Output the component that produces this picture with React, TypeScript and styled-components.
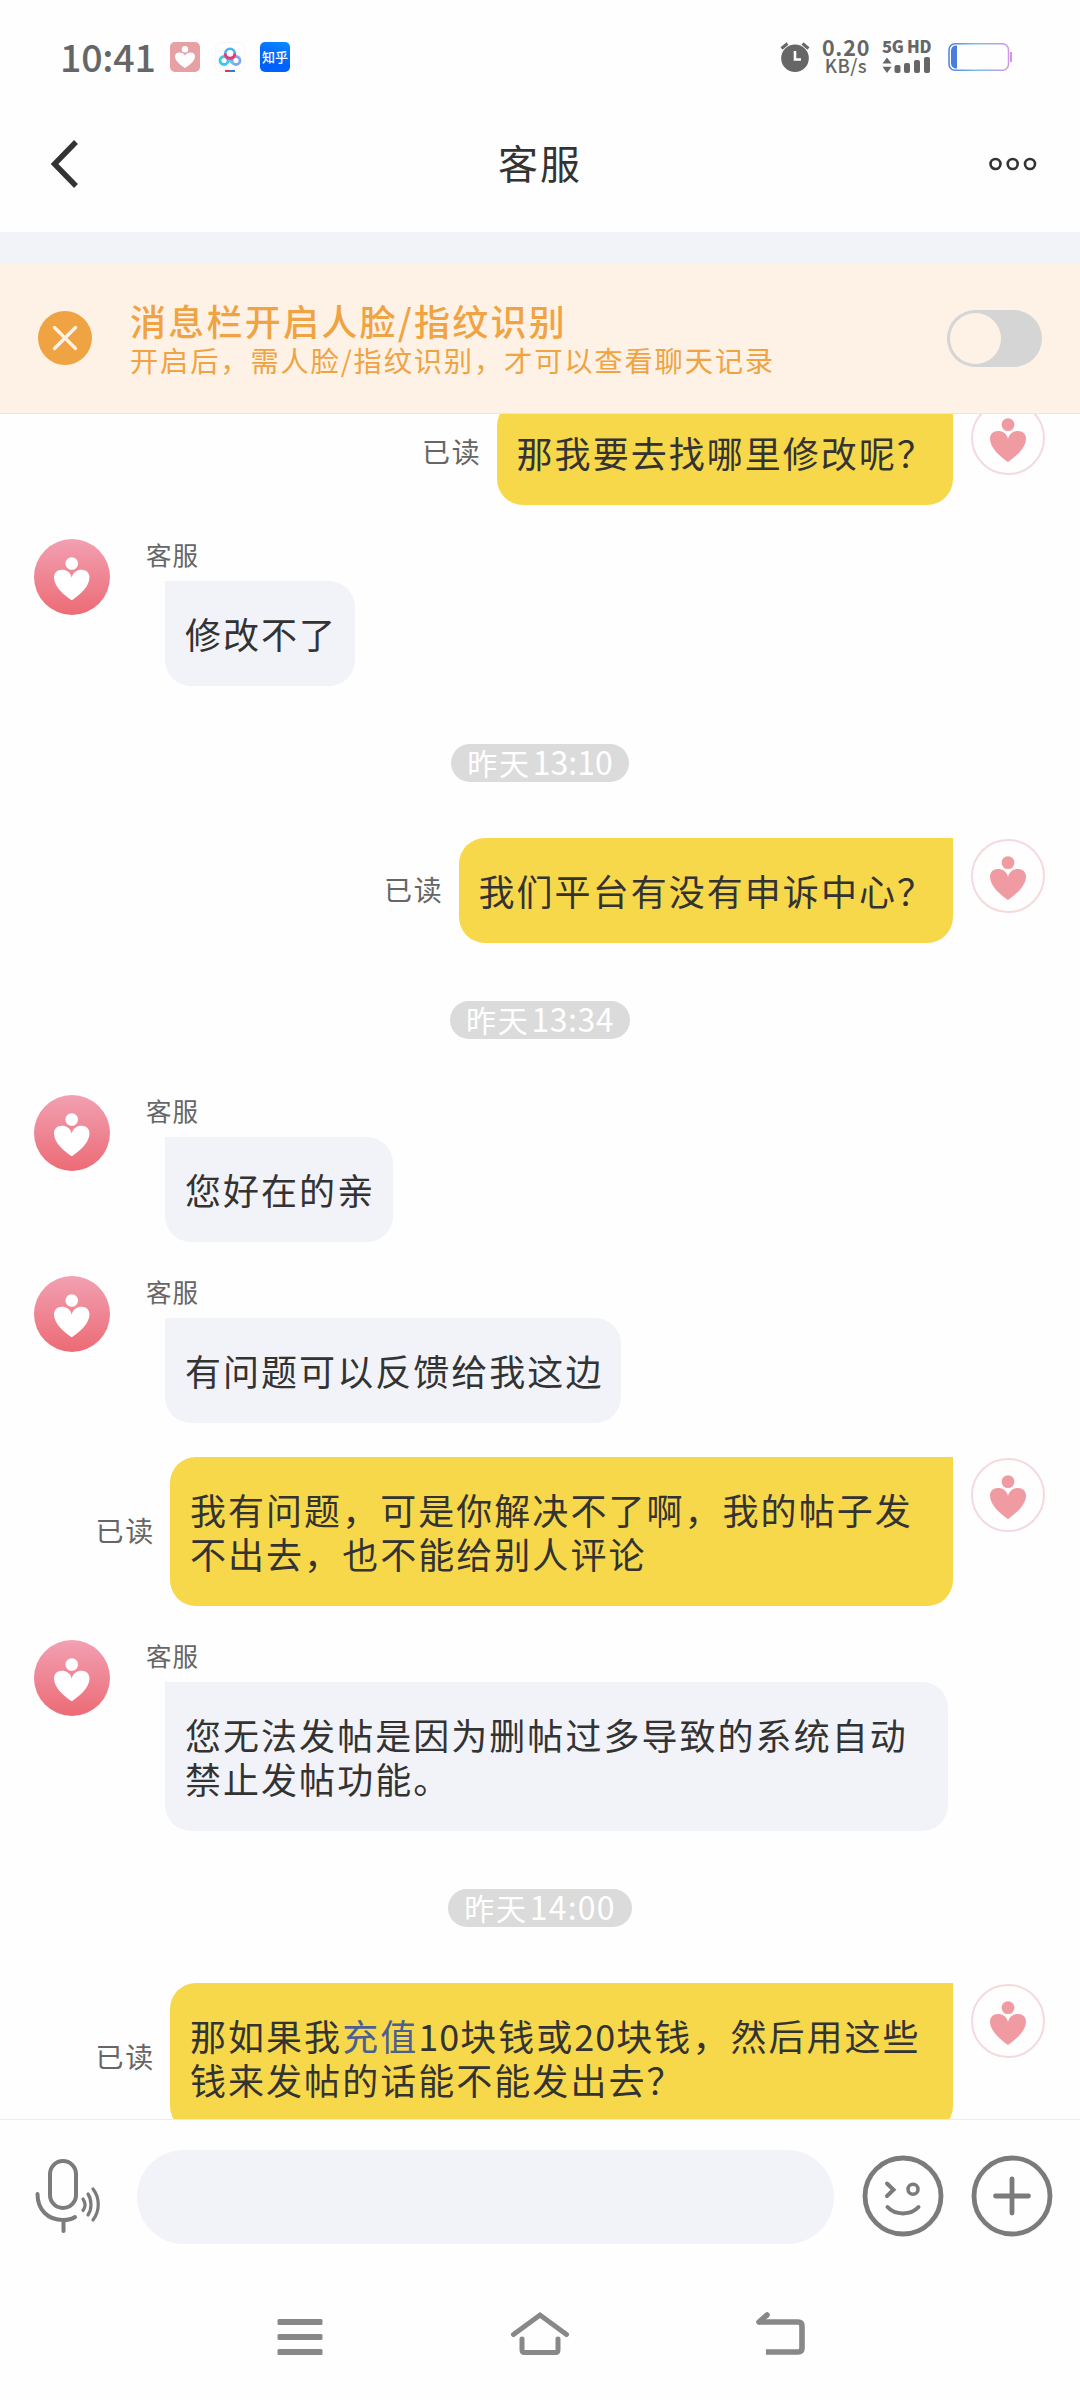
import React from "react";
import styled, { createGlobalStyle } from "styled-components";

const GlobalStyle = createGlobalStyle`
  * { box-sizing: border-box; }
  body {
    margin: 0;
    background: #fefefe;
    font-family: "Noto Sans CJK SC", "Noto Sans", sans-serif;
    color: #333;
  }
  svg { display: block; flex: none; }
`;

const Screen = styled.div`
  width: 1080px;
  height: 2400px;
  display: flex;
  flex-direction: column;
  overflow: hidden;
  background: #fefefe;
`;

/* Status bar */
const StatusBar = styled.div`
  height: 96px;
  flex: none;
  display: flex;
  align-items: flex-start;
  justify-content: space-between;
  padding: 39px 67px 0 60px;
  color: #666;
`;
const StatusGroup = styled.div<{ $gap: number }>`
  display: flex;
  align-items: flex-start;
  gap: ${(p) => p.$gap}px;
`;
const Clock = styled.div`
  width: 95px;
  height: 36px;
  line-height: 34px;
  font-size: 37.5px;
  font-weight: 500;
  letter-spacing: -0.2px;
  white-space: nowrap;
`;
const AppIcon = styled.div`
  margin-top: 3px;
`;
const ZhihuIcon = styled(AppIcon)`
  width: 30px;
  height: 30px;
  border-radius: 5px;
  background: linear-gradient(20deg, #0061fb 40%, #0a8dff);
  color: #fff;
  font-size: 13px;
  font-weight: 500;
  line-height: 29px;
  text-align: center;
  white-space: nowrap;
`;
const NetSpeed = styled.div`
  width: 50px;
  margin-top: -1px;
  display: flex;
  flex-direction: column;
  align-items: center;
  font-weight: 700;
  line-height: 18px;
`;
const SpeedValue = styled.span`
  font-size: 21.5px;
  letter-spacing: 0.8px;
  height: 18px;
`;
const SpeedUnit = styled.span`
  font-size: 18.5px;
  font-weight: 500;
  letter-spacing: 0.4px;
  height: 18px;
`;
const Signal = styled.div`
  width: 50px;
  margin-right: 4px;
  display: flex;
  flex-direction: column;
  gap: 3px;
`;
const SignalLabel = styled.span`
  font-size: 16.5px;
  line-height: 14px;
  height: 15px;
  font-weight: 900;
  letter-spacing: -0.3px;
  white-space: nowrap;
`;

/* Header */
const Header = styled.header`
  height: 136px;
  flex: none;
  display: grid;
  grid-template-columns: 120px 1fr 120px;
  align-items: center;
`;
const Title = styled.h1`
  margin: 0;
  padding-bottom: 4px;
  text-align: center;
  font-size: 40px;
  font-weight: 400;
  letter-spacing: 2px;
  line-height: 56px;
`;
const BackSlot = styled.div`
  padding-left: 48px;
`;
const MoreSlot = styled.div`
  padding-left: 28px;
`;
const Divider = styled.div`
  height: 32px;
  flex: none;
  background: #f2f3f9;
`;

/* Face / fingerprint banner */
const Banner = styled.section`
  height: 150px;
  flex: none;
  display: flex;
  align-items: center;
  padding: 0 38px 1px;
  background: #fdf2e5;
  border-bottom: 1px solid #e9e7e4;
  color: #f0a342;
`;
const BannerText = styled.div`
  flex: 1;
  padding-left: 38px;
  padding-top: 1px;
`;
const BannerTitle = styled.div`
  font-size: 36px;
  font-weight: 500;
  line-height: 42px;
  letter-spacing: 2.25px;
`;
const BannerNote = styled.div`
  font-size: 28.3px;
  line-height: 38px;
  letter-spacing: 1.8px;
`;
const Toggle = styled.div`
  width: 95px;
  height: 57px;
  border-radius: 29px;
  padding: 3px;
  background: #d5d5d5;
`;
const Knob = styled.div`
  width: 51px;
  height: 51px;
  border-radius: 50%;
  background: #fdf2e5;
`;

/* Conversation */
const Chat = styled.main`
  height: 1705px;
  flex: none;
  overflow: hidden;
`;
const Thread = styled.div`
  display: flex;
  flex-direction: column;
  gap: 34px;
  margin-top: -14px;
`;
const TimeRow = styled.div`
  display: flex;
  justify-content: center;
  padding: 24px 0 22px;
`;
const TimePill = styled.div`
  height: 38px;
  line-height: 34px;
  border-radius: 19px;
  padding: 0 16px;
  background: #dbdbdb;
  color: #fff;
  font-size: 30px;
  letter-spacing: 1.8px;
  white-space: nowrap;
`;
const PillDigits = styled.span<{ $tracking: number }>`
  font-size: 32px;
  letter-spacing: ${(p) => p.$tracking}px;
  margin-left: 2px;
`;
const MineRow = styled.div`
  display: flex;
  justify-content: flex-end;
  padding-right: 35px;
`;
const MineBody = styled.div`
  display: flex;
  align-items: center;
  gap: 15px;
  margin-right: 18px;
`;
const ReadMark = styled.span`
  padding-bottom: 3px;
  font-size: 28px;
  letter-spacing: 1.8px;
  color: #666;
`;
const MineAvatar = styled.div`
  width: 74px;
  height: 74px;
  margin-top: 1px;
  border: 2px solid #f4dadc;
  border-radius: 50%;
  display: flex;
  align-items: flex-start;
  justify-content: center;
  padding-top: 15px;
`;
const Bubble = styled.div<{ $mine?: boolean }>`
  padding: 30px 18px 31px 20px;
  font-size: 36px;
  line-height: 44px;
  letter-spacing: 2.04px;
  white-space: pre;
  background: ${(p) => (p.$mine ? "#f7d84b" : "#f2f3f9")};
  border-radius: ${(p) => (p.$mine ? "26px 0 26px 26px" : "0 26px 26px 26px")};
`;
const WideBubble = styled(Bubble)`
  width: 783px;
`;
const Digits = styled.span`
  letter-spacing: 1px;
`;
const Keyword = styled.span`
  color: #4c5f91;
`;
const AgentRow = styled.div`
  display: flex;
  align-items: flex-start;
  padding-left: 34px;
`;
const AgentAvatar = styled.div`
  width: 76px;
  height: 76px;
  border-radius: 50%;
  background: linear-gradient(#f2a0b2, #ec6b75);
  display: flex;
  justify-content: center;
  padding-top: 18px;
`;
const AgentBody = styled.div`
  padding-left: 36px;
  display: flex;
  flex-direction: column;
  align-items: flex-start;
`;
const AgentName = styled.span`
  height: 42px;
  padding-top: 1px;
  line-height: 28px;
  font-size: 25.5px;
  letter-spacing: 0.9px;
  color: #666;
`;
const Indent = styled.div`
  padding-left: 19px;
`;

/* Composer and system navigation */
const Composer = styled.footer`
  height: 156px;
  flex: none;
  display: flex;
  align-items: flex-start;
  border-top: 1px solid #ebebeb;
  padding: 30px 0 0 32px;
`;
const Field = styled.div`
  width: 697px;
  height: 94px;
  flex: none;
  margin: 0 28px 0 33px;
  border-radius: 47px;
  background: #f2f3f9;
`;
const IconSlot = styled.div`
  flex: none;
  margin: 5px 27px 0 0;
`;
const MicSlot = styled.div`
  width: 72px;
  flex: none;
  margin-top: 6px;
`;
const NavBar = styled.nav`
  flex: 1;
  display: flex;
  justify-content: center;
  gap: 180px;
  padding-top: 29px;
`;

function HeartFigure({ color, size = 36 }: { color: string; size?: number }) {
  return (
    <svg width={size} height={(size * 44) / 36} viewBox="0 0 36 44">
      <circle cx="18" cy="6.6" r="6.4" fill={color} />
      <path
        fill={color}
        d="M18 44C11 39 0 30.500 0 20.500C0 16 3.300 12.900 8 12.900C12.500 12.900 16.800 15.300 18 21C19.200 15.300 23.500 12.900 28 12.900C32.700 12.900 36 16 36 20.500C36 30.500 25 39 18 44Z"
      />
    </svg>
  );
}

function Mine({ children, wide }: { children: React.ReactNode; wide?: boolean }) {
  const B = wide ? WideBubble : Bubble;
  return (
    <MineRow>
      <MineBody>
        <ReadMark>已读</ReadMark>
        <B $mine>{children}</B>
      </MineBody>
      <MineAvatar>
        <HeartFigure color="#f09ba1" />
      </MineAvatar>
    </MineRow>
  );
}

function Agent({ children, wide }: { children: React.ReactNode; wide?: boolean }) {
  const B = wide ? WideBubble : Bubble;
  return (
    <AgentRow>
      <AgentAvatar>
        <HeartFigure color="#fff" size={35.5} />
      </AgentAvatar>
      <AgentBody>
        <AgentName>客服</AgentName>
        <Indent>
          <B>{children}</B>
        </Indent>
      </AgentBody>
    </AgentRow>
  );
}

function Time({ at, tracking = 0 }: { at: string; tracking?: number }) {
  return (
    <TimeRow>
      <TimePill>
        昨天<PillDigits $tracking={tracking}>{at}</PillDigits>
      </TimePill>
    </TimeRow>
  );
}

export default function App() {
  return (
    <Screen>
      <GlobalStyle />
      <StatusBar>
        <StatusGroup $gap={15}>
          <Clock>10:41</Clock>
          <AppIcon>
            <svg width="30" height="30" viewBox="0 0 30 30">
              <rect width="30" height="30" rx="5" fill="#e5a1a4" />
              <circle cx="15" cy="7.200" r="3.200" fill="#fff" />
              <path fill="#fff" d="M15 26C11 23.500 5 19 5 14.500C5 12 7 10.500 9.300 10.500C12 10.500 14 11.500 15 13.500C16 11.500 18 10.500 20.700 10.500C23 10.500 25 12 25 14.500C25 19 19 23.500 15 26Z" />
            </svg>
          </AppIcon>
          <AppIcon>
            <svg width="30" height="30" viewBox="0 0 30 30" fill="none">
              <rect x=".5" y=".5" width="29" height="29" rx="5" stroke="#f7f7f7" />
              <circle cx="9" cy="18.500" r="4" stroke="#3cc8ee" strokeWidth="2.800" />
              <circle cx="21" cy="18.500" r="4" stroke="#7fa9ee" strokeWidth="2.800" />
              <path d="M11.500 16L18.500 21.500" stroke="#5fc4f2" strokeWidth="2.600" />
              <circle cx="15" cy="11.500" r="4.800" stroke="#48b4ea" strokeWidth="2.600" />
              <path d="M10.200 11.500a4.800 4.800 0 0 0 9.600 0" stroke="#e8397a" strokeWidth="3" />
              <path d="M10 29h5" stroke="#ee3344" strokeWidth="2" />
              <path d="M15 29h5" stroke="#3378ee" strokeWidth="2" />
            </svg>
          </AppIcon>
          <ZhihuIcon>知乎</ZhihuIcon>
        </StatusGroup>
        <StatusGroup $gap={11}>
          <svg width="30" height="34" viewBox="0 0 30 34">
            <circle cx="15" cy="19.300" r="13.800" fill="#666" />
            <path d="M1.500 9.500L7.500 4.500M28.500 9.500L22.500 4.500" stroke="#666" strokeWidth="3" />
            <path d="M15 12v8.500h6" fill="none" stroke="#fff" strokeWidth="2.600" />
          </svg>
          <NetSpeed>
            <SpeedValue>0.20</SpeedValue>
            <SpeedUnit>KB/s</SpeedUnit>
          </NetSpeed>
          <Signal>
            <SignalLabel>5G HD</SignalLabel>
            <svg width="50" height="18" viewBox="0 0 50 18" fill="#666">
              <path d="M5 .5L9.500 6.500H.5ZM5 16L.5 9.800H9.500Z" />
              <rect x="12.500" y="8" width="6" height="8" rx="2" />
              <rect x="22" y="6" width="6" height="10" rx="2" />
              <rect x="32" y="3" width="6" height="13" rx="2" />
              <rect x="42" y="0" width="6" height="16" rx="2" />
            </svg>
          </Signal>
          <svg width="66" height="34" viewBox="0 0 66 34" fill="none">
            <defs>
              <linearGradient id="battery" x1="0" x2="1" y1="0" y2="0">
                <stop offset="0" stopColor="#4f7fe0" />
                <stop offset=".45" stopColor="#7cc0e6" />
                <stop offset="1" stopColor="#cf96ea" />
              </linearGradient>
            </defs>
            <rect x="2" y="4.700" width="59.500" height="26.600" rx="6" stroke="url(#battery)" strokeWidth="1.500" />
            <path d="M10 6.500V29.500C6 29.500 4 27.500 4 24V12C4 8.500 6 6.500 10 6.500Z" fill="#4a7de2" />
            <path d="M64 13v10" stroke="#cf96ea" strokeWidth="2" />
          </svg>
        </StatusGroup>
      </StatusBar>

      <Header>
        <BackSlot>
          <svg width="34" height="50" viewBox="0 0 34 50">
            <path d="M28 3L6.500 25L28 47" fill="none" stroke="#333" strokeWidth="5.400" />
          </svg>
        </BackSlot>
        <Title>客服</Title>
        <MoreSlot>
          <svg width="50" height="16" viewBox="0 0 50 16" fill="none" stroke="#333" strokeWidth="2.600">
            <circle cx="7.500" cy="8" r="5" />
            <circle cx="24.700" cy="8" r="5" />
            <circle cx="42" cy="8" r="5" />
          </svg>
        </MoreSlot>
      </Header>
      <Divider />

      <Banner>
        <svg width="54" height="54" viewBox="0 0 54 54">
          <circle cx="27" cy="27" r="27" fill="#f0a342" />
          <path d="M16.500 16.500L37.500 37.500M37.500 16.500L16.500 37.500" stroke="#fdf2e5" strokeWidth="3.400" strokeLinecap="round" />
        </svg>
        <BannerText>
          <BannerTitle>消息栏开启人脸/指纹识别</BannerTitle>
          <BannerNote>开启后，需人脸/指纹识别，才可以查看聊天记录</BannerNote>
        </BannerText>
        <Toggle>
          <Knob />
        </Toggle>
      </Banner>

      <Chat>
        <Thread>
          <Mine>那我要去找哪里修改呢？</Mine>
          <Agent>修改不了</Agent>
          <Time at="13:10" />
          <Mine>我们平台有没有申诉中心？</Mine>
          <Time at="13:34" tracking={0.5} />
          <Agent>您好在的亲</Agent>
          <Agent>有问题可以反馈给我这边</Agent>
          <Mine wide>{"我有问题，可是你解决不了啊，我的帖子发\n不出去，也不能给别人评论"}</Mine>
          <Agent wide>{"您无法发帖是因为删帖过多导致的系统自动\n禁止发帖功能。"}</Agent>
          <Time at="14:00" tracking={1.2} />
          <Mine wide>
            那如果我<Keyword>充值</Keyword>
            <Digits>10</Digits>块钱或<Digits>20</Digits>
            {"块钱，然后用这些\n钱来发帖的话能不能发出去？"}
          </Mine>
        </Thread>
      </Chat>

      <Composer>
        <MicSlot>
          <svg width="72" height="80" viewBox="0 0 72 80" fill="none" stroke="#7b7b7b" strokeWidth="4" strokeLinecap="round">
            <rect x="18" y="5" width="26" height="47" rx="13" />
            <path d="M5.500 38C5.500 54 16 64 31 64C36 64 40 63 43 61M31.500 65V75" />
            <path d="M51 43C53.500 46.500 53.500 51 51 54.500M56 38C60 44 60 53 56 59M61 33C68 42 68 55 61 64" strokeWidth="3.200" />
          </svg>
        </MicSlot>
        <Field />
        <IconSlot>
          <svg width="82" height="82" viewBox="0 0 82 82" fill="none" stroke="#7b7b7b">
            <circle cx="41" cy="41" r="38" strokeWidth="4.800" />
            <path d="M25 28.500L31.500 34.800L25 41M25.500 52C33 60.500 49 60.500 56.500 52" strokeWidth="4" strokeLinecap="round" />
            <circle cx="51" cy="34.200" r="5" strokeWidth="3.600" />
          </svg>
        </IconSlot>
        <IconSlot>
          <svg width="82" height="82" viewBox="0 0 82 82" fill="none" stroke="#7b7b7b">
            <circle cx="41" cy="41" r="38" strokeWidth="4.800" />
            <path d="M41 24V58M24.500 41H57.500" strokeWidth="4.800" strokeLinecap="round" />
          </svg>
        </IconSlot>
      </Composer>

      <NavBar>
        <svg width="60" height="60" viewBox="0 0 60 60" fill="#888">
          <rect x="7.500" y="15" width="45" height="6" rx="1.500" />
          <rect x="7.500" y="30" width="45" height="6" rx="1.500" />
          <rect x="7.500" y="45" width="45" height="6" rx="1.500" />
        </svg>
        <svg width="60" height="60" viewBox="0 0 60 60" fill="none" stroke="#888" strokeWidth="5" strokeLinecap="round" strokeLinejoin="round">
          <path d="M3.500 30.500L30 11L56.500 30.500" strokeLinejoin="miter" />
          <path d="M12 35V46Q12 48.500 14.500 48.500H45.500Q48 48.500 48 46V35" />
        </svg>
        <svg width="60" height="60" viewBox="0 0 60 60" fill="none" stroke="#888" strokeWidth="5.600" strokeLinejoin="round">
          <path d="M9 18H48Q52 18 52 22V44Q52 48 48 48H16" />
          <path d="M9 18L17 11" strokeLinecap="round" />
        </svg>
      </NavBar>
    </Screen>
  );
}
